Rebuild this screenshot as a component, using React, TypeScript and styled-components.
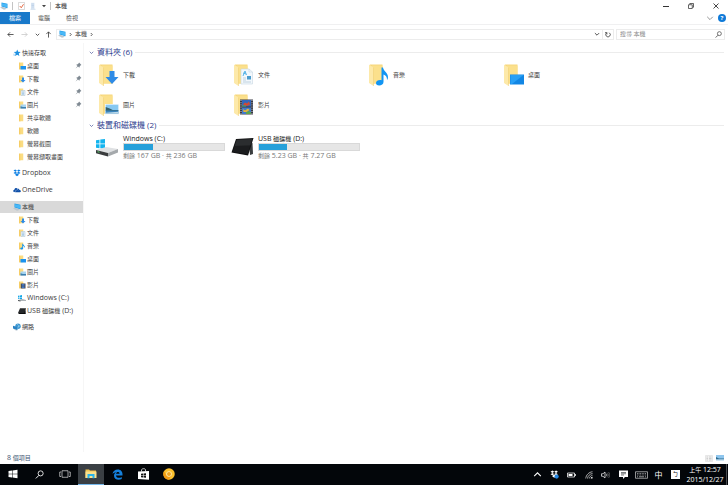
import React from "react";
import styled, { createGlobalStyle, css } from "styled-components";

const GlobalStyle = createGlobalStyle`
  *, *::before, *::after { box-sizing: border-box; }
  body {
    margin: 0;
    background: #fff;
    color: #3c3c3c;
    font-family: "Open Sans", "Noto Sans CJK TC", sans-serif;
    font-size: 7px;
    line-height: 10px;
  }
  button, input {
    margin: 0;
    padding: 0;
    border: 0;
    background: none;
    color: inherit;
    font: inherit;
  }
  ul { margin: 0; padding: 0; list-style: none; }
  a { color: inherit; text-decoration: none; }
  svg { display: block; flex: none; }
`;

/* ---------- text ---------- */

const Han = styled.span`
  font-size: 6px;
`;

/* Han glyphs are set one step smaller than the Latin text around them. */
function Mixed({ text }: { text: string }) {
  return (
    <span>
      {text.split(/([\u3400-\u9fff]+)/).map((part, i) =>
        i % 2 ? <Han key={i}>{part}</Han> : part
      )}
    </span>
  );
}

/* ---------- icons ---------- */

type SvgProps = { w: number; h: number; box?: string; children: React.ReactNode };
const Svg = ({ w, h, box, children }: SvgProps) => (
  <svg width={w} height={h} viewBox={box ?? `0 0 ${w} ${h}`} fill="none" aria-hidden="true">
    {children}
  </svg>
);

const PcIcon = () => (
  <Svg w={8} h={8} box="0 0 16 16">
    <path d="M3 1l12 2.500v9L3 9z" fill="#1f9be8" />
    <path d="M4 2.500l10 2v6.500L4 8z" fill="#49b8f7" />
    <path d="M0 11l5-1.500 9 4-6 2z" fill="#b9c6cf" />
  </Svg>
);

type Kind = "download" | "document" | "music" | "desktop" | "picture" | "video";

const Overlay = ({ kind }: { kind: Kind }) => {
  switch (kind) {
    case "download":
      return <path d="M11.500 7h5v6h4l-6.500 7-6.500-7h4z" fill="#2f8be6" />;
    case "document":
      return (
        <>
          <path d="M8 5h8l3.500 3v12H8z" fill="#f3f8fc" stroke="#c8d6e2" strokeWidth=".6" />
          <path d="M16 5v3h3.500" stroke="#c8d6e2" strokeWidth=".6" />
          <path d="M10 12l2-5 1.500 4M10 9l3 1" stroke="#58b4e6" strokeWidth="1" />
          <path d="M14 12h4v3.500h-4z" fill="#4b9ccd" />
          <path d="M10 14h3M10 16h3M10 18h8" stroke="#aac3d4" strokeWidth=".7" />
        </>
      );
    case "music":
      return (
        <path
          d="M13.500 3.500h1.500c.5 4 5 5 5 9.500 0 1.500-.5 2.500-1 3 .3-3-1.500-5-3.500-5.500v7.500c0 2-2 3.500-4.300 3.500S8 20.500 8 19c0-2 2.500-3.300 5.500-2.800z"
          fill="#1295f3"
        />
      );
    case "desktop":
      return (
        <>
          <path d="M7 10.500h14v10H7z" fill="#1286e4" />
          <path d="M7.500 11h13L9 20H7.500z" fill="#28a0f6" />
        </>
      );
    case "picture":
      return (
        <>
          <path d="M7 10h14v10.500H7z" fill="#f4f8fb" />
          <path d="M7.700 10.700h12.600v9H7.700z" fill="#86c8f2" />
          <path d="M7.700 13l4 1.500 3 1.500 5.600 0v1H7.700z" fill="#33606c" />
          <path d="M7.700 16.500h12.600v3.200H7.700z" fill="#3a84bd" />
          <path d="M7.700 18.700l12.600-1v2H7.700z" fill="#bcd9e8" />
        </>
      );
    case "video":
      return (
        <>
          <path d="M7 5.500h13v15H7z" fill="#3a3a44" />
          <path d="M9 6h9v6.500H9z" fill="#3467bb" />
          <path d="M9 13.500h9V20H9z" fill="#4079cb" />
          <path d="M10 10.500l2-2 2 1 2-2 1 3-3 1.500z" fill="#d44a31" />
          <path d="M9 11.500h4v1H9zM13 18l3-1 2 1.500V20h-5z" fill="#5ca64f" />
          <path d="M10 15l2 1.500 3-2 1.500 1.500-3 2-3 0z" fill="#e6b53a" />
          <path d="M8 6v15M19 6v15" stroke="#d8dbe2" strokeWidth=".9" strokeDasharray="1 1.200" />
        </>
      );
  }
};

const BigFolder = ({ kind }: { kind: Kind }) => (
  <Svg w={22} h={22}>
    <path d="M2 .5h12.500v19H2z" fill="#f6d67c" />
    <path d="M4 1.500h10.500v18H4z" fill="#fbe08c" />
    <path d="M1 .5l4.500 3V22L1 19z" fill="#fde9a9" />
    <path d="M5.500 3.500V22" stroke="#efcb6c" strokeWidth=".5" />
    <Overlay kind={kind} />
  </Svg>
);

const SmallOverlay = ({ kind }: { kind: Kind }) => {
  switch (kind) {
    case "download":
      return <path d="M8 5h4v5h3l-5 5-5-5h3z" fill="#2f8be6" />;
    case "document":
      return (
        <>
          <path d="M6 5h8v10H6z" fill="#eaf2f8" stroke="#a9bfd0" />
          <path d="M8 8h4M8 10.500h4M8 12.500h4" stroke="#68a5d0" />
        </>
      );
    case "music":
      return (
        <path d="M8.500 3.500h1.500c.5 3 4 4 4 6.500l-.8 2c0-2-1-3.500-3-4v4.500c0 1.500-1.400 2.500-3 2.500s-2.700-1-2.700-2c0-1.500 2-2.400 4-2z" fill="#1295f3" />
      );
    case "desktop":
      return <path d="M5 8h11v7H5z" fill="#1b93ef" />;
    case "picture":
      return (
        <>
          <path d="M5 7h11v8H5z" fill="#a8d5f1" />
          <path d="M5 10.500l5 1.500h6v3H5z" fill="#3d7fae" />
        </>
      );
    case "video":
      return (
        <>
          <path d="M5.500 5h9.500v10H5.500z" fill="#41434f" />
          <path d="M7.500 6h5.500v3.500H7.500zM7.500 10.500h5.500V14H7.500z" fill="#4579c4" />
        </>
      );
  }
};

const SmallFolder = ({ kind }: { kind?: Kind }) => (
  <Svg w={8} h={8} box="0 0 16 16">
    <path d="M2 1h8.500v13.500H2z" fill="#fbdc82" />
    <path d="M2 1l2.500 1.500v13L2 14z" fill="#f6cd66" />
    {kind && <SmallOverlay kind={kind} />}
  </Svg>
);

const StarIcon = () => (
  <Svg w={8} h={8} box="0 0 16 16">
    <path d="M8.500 1l1.900 4.600 5.100.3-4 3.200 1.300 5.100-4.400-2.800-4.400 2.600 1.300-4.900L1.500 5.900l5-.3z" fill="#1e90e0" />
    <path d="M0 10.500h4M1 13h3" stroke="#7bbdec" />
  </Svg>
);

const dropboxPath =
  "M4.500 1L8 3.300 4.600 5.500 1 3.200zM11.500 1L15 3.200l-3.600 2.300L8 3.300zM1 7.800l3.600-2.300L8 7.700 4.500 10zM15 7.800l-3.600-2.300L8 7.700l3.500 2.300zM4.500 11L8 8.700l3.500 2.300v1.200L8 14.500l-3.500-2.300z";

const DropboxIcon = () => (
  <Svg w={8} h={8} box="0 0 16 16">
    <path d={dropboxPath} fill="#0f80e3" />
  </Svg>
);

const OneDriveIcon = () => (
  <Svg w={8} h={8} box="0 0 16 16">
    <path d="M2.500 12C-.5 11.500 0 7.800 2.700 7.600 3 4.500 7 3 9 5.500c2.500-.8 4 1 4 2.500 3.500.2 3.500 4 .5 4.500H5z" fill="#0f4fa8" />
    <path d="M5 12.500c-1.500-2 0-4 1.700-3.800 1-2 3.600-1.800 4.300 0" stroke="#fff" strokeWidth=".7" />
  </Svg>
);

const DriveSmall = () => (
  <Svg w={8} h={8} box="0 0 16 16">
    <path d="M0 3.500l3-.5v3H0zM4 2.800L8 2v4H4zM0 7h3v3l-3-.5zM4 7h4v4l-4-.7z" fill="#14a7e8" />
    <path d="M0 12l9-2 7 2v2H5z" fill="#aeb4b8" />
    <path d="M0 12l5 1v2l-5-1z" fill="#4b4f52" />
  </Svg>
);

const TabletSmall = () => (
  <Svg w={8} h={8} box="0 0 16 16">
    <path d="M4 2.500h12L13.500 12H0z" fill="#26282a" />
    <path d="M0 12h12l3-6 .5 8H2z" fill="#0b0c0d" />
  </Svg>
);

const NetworkIcon = () => (
  <Svg w={8} h={8} box="0 0 16 16">
    <circle cx="10" cy="6.500" r="5.500" fill="#3d97d1" />
    <path d="M0 5.500l9 2.500v6.500L0 11z" fill="#2b83c4" />
    <path d="M8 2l4 4-3 5M15 5l-6 3" stroke="#a9d9f2" />
    <path d="M3 13l5 1.500" stroke="#8799a5" />
  </Svg>
);

const PinIcon = () => (
  <Svg w={7} h={7} box="0 0 12 12">
    <path d="M7 1l4 4-1.200.6L8 7.500 7.500 10 5.200 7.700 1 11l3.300-4.200L2 4.500 4.500 4 6.400 2.200z" fill="#7f8992" />
  </Svg>
);

const WindowsDrive = () => (
  <Svg w={24} h={22}>
    <path d="M1 4.200l3.500-.5v3.800H1zM5.300 3.600L10 3v4.500H5.300zM1 8.300h3.500v3.900L1 11.700zM5.300 8.300H10V13l-4.700-.7z" fill="#14b4ee" />
    <path d="M1 14l10-3 12 2-10 4z" fill="#dfe1e3" />
    <path d="M1 14l12 3v3.500L1 17.200z" fill="#3a3c3e" />
    <path d="M13 17l10-4v3.500l-10 4z" fill="#a5a9ac" />
    <path d="M2.500 15.700l2 .5" stroke="#58d16b" />
  </Svg>
);

const TabletDrive = () => (
  <Svg w={24} h={22}>
    <path d="M19 8l3.500-1L23 18l-3 1z" fill="#3b3d3f" />
    <path d="M6 3l17.500-1L18 19.500 1.500 16.500z" fill="#101112" />
    <path d="M6.800 3.800l15.500-.9-2 6.800L4.600 10z" fill="#2b2d2f" />
    <path d="M4.600 10l15.700-.3L17.500 18.300 2.600 15.700z" fill="#1b1c1e" />
  </Svg>
);

type Dir = "down" | "up" | "right";
const chevrons: Record<Dir, string> = {
  down: "M1.500 3.500L5 7 8.500 3.500",
  up: "M2 6.500L5 3.500 8 6.500",
  right: "M3.500 2L6.500 5 3.500 8",
};
const Chevron = ({ dir, size = 5, weight = 1.6 }: { dir: Dir; size?: number; weight?: number }) => (
  <Svg w={size} h={size} box="0 0 10 10">
    <path d={chevrons[dir]} stroke="currentColor" strokeWidth={weight} />
  </Svg>
);

const arrows = {
  left: "M15 8H2M7 3L2 8l5 5",
  right: "M1 8h13M9 3l5 5-5 5",
  up: "M8 15V2M3 7l5-5 5 5",
};
const Arrow = ({ dir }: { dir: keyof typeof arrows }) => (
  <Svg w={7} h={7} box="0 0 16 16">
    <path d={arrows[dir]} stroke="currentColor" strokeWidth="1.800" />
  </Svg>
);

const Magnifier = ({ size }: { size: number }) => (
  <Svg w={size} h={size} box="0 0 16 16">
    <circle cx="10" cy="6" r="4.500" stroke="currentColor" strokeWidth="1.500" />
    <path d="M7 9.500L1.500 15" stroke="currentColor" strokeWidth="1.700" />
  </Svg>
);

/* ---------- window frame ---------- */

const Screen = styled.div`
  display: flex;
  flex-direction: column;
  min-height: 100vh;
`;

const Explorer = styled.main`
  display: flex;
  flex: 1;
  flex-direction: column;
`;

const Bar = styled.div`
  display: flex;
  align-items: center;
`;

const TitleBar = styled(Bar)`
  height: 12px;
`;

const QuickTools = styled(Bar)`
  gap: 4px;
  padding-right: 4px;
`;

const Divider = styled.span`
  width: 1px;
  height: 8px;
  background: #c4c4c4;
`;

const WindowTitle = styled.h1`
  margin: 0;
  font-size: 7px;
  font-weight: 400;
  color: #222;
`;

const IconButton = styled.button<{ $w?: number; $tone?: string }>`
  display: flex;
  flex: none;
  align-items: center;
  justify-content: center;
  width: ${(p) => p.$w ?? 8}px;
  color: ${(p) => p.$tone ?? "#333"};
`;

const PushRight = styled(Bar)`
  margin-left: auto;
`;

const Ribbon = styled(Bar)`
  height: 13px;
  padding-right: 2px;
  border-bottom: 1px solid #f0f0f1;
`;

const Tab = styled.button<{ $active?: boolean }>`
  width: ${(p) => (p.$active ? 30 : 28)}px;
  height: 12px;
  color: #555;
  ${(p) =>
    p.$active &&
    css`
      background: #1979ca;
      color: #fff;
    `}
`;

const HelpBadge = styled.button`
  width: 8px;
  height: 8px;
  border-radius: 50%;
  background: #0f7ad8;
  color: #fff;
  font-size: 6px;
  font-weight: 700;
  line-height: 8px;
`;

const AddressRow = styled(Bar)`
  gap: 2px;
  height: 18px;
  padding: 0 3px 0 4px;
`;

const NavButtons = styled(Bar)`
  width: 50px;
  justify-content: space-between;
`;

const AddressBox = styled(Bar)`
  flex: 1;
  height: 11px;
  border: 1px solid #ececec;
  padding-left: 1px;
  gap: 2px;
`;

const RefreshCell = styled(Bar)`
  height: 9px;
  border-left: 1px solid #ececec;
`;

const SearchBox = styled(Bar)`
  flex: 0 0 109px;
  height: 11px;
  border: 1px solid #ececec;
  padding: 0 2px 0 3px;
`;

const SearchInput = styled.input`
  flex: 1;
  min-width: 0;
  outline: 0;
  font-size: 6px;
  &::placeholder {
    color: #8a8a8a;
    opacity: 1;
  }
`;

const Body = styled.div`
  display: flex;
  flex: 1;
`;

/* ---------- navigation pane ---------- */

const Nav = styled.nav`
  flex: 0 0 84px;
  padding-top: 4px;
  border-right: 1px solid #f6f6f6;
`;

const Group = styled.div<{ $nested?: boolean }>`
  margin-bottom: ${(p) => (p.$nested ? 4 : 5)}px;
`;

const NavLink = styled.a<{ $child?: boolean; $selected?: boolean }>`
  display: flex;
  align-items: center;
  gap: 1px;
  height: ${(p) => (p.$child ? 13 : 12)}px;
  padding-left: ${(p) => (p.$child ? 18 : 13)}px;
  padding-right: 1px;
  white-space: nowrap;
  background: ${(p) => (p.$selected ? "#d9d9d9" : "transparent")};
`;

const PinSlot = styled.span`
  margin-left: auto;
`;

type Entry = { name: string; icon: React.ReactNode; pinned?: boolean };
type NavGroup = Entry & { selected?: boolean; items?: Entry[] };

const folder = (name: string, kind?: Kind, pinned?: boolean): Entry => ({
  name,
  icon: <SmallFolder kind={kind} />,
  pinned,
});

const groups: NavGroup[] = [
  {
    name: "快速存取",
    icon: <StarIcon />,
    items: [
      folder("桌面", "desktop", true),
      folder("下載", "download", true),
      folder("文件", "document", true),
      folder("圖片", "picture", true),
      folder("共享軟體"),
      folder("軟體"),
      folder("螢幕截圖"),
      folder("螢幕擷取畫面"),
    ],
  },
  { name: "Dropbox", icon: <DropboxIcon /> },
  { name: "OneDrive", icon: <OneDriveIcon /> },
  {
    name: "本機",
    icon: <PcIcon />,
    selected: true,
    items: [
      folder("下載", "download"),
      folder("文件", "document"),
      folder("音樂", "music"),
      folder("桌面", "desktop"),
      folder("圖片", "picture"),
      folder("影片", "video"),
      { name: "Windows (C:)", icon: <DriveSmall /> },
      { name: "USB 磁碟機 (D:)", icon: <TabletSmall /> },
    ],
  },
  { name: "網路", icon: <NetworkIcon /> },
];

/* ---------- content pane ---------- */

const Content = styled.section`
  flex: 1;
  min-width: 0;
  padding: 4px 4px 0 5px;
`;

const SectionHead = styled.h2`
  display: flex;
  align-items: center;
  gap: 3px;
  height: 10px;
  margin: 0;
  font-size: 8px;
  font-weight: 400;
  color: #2b3a8c;
  white-space: nowrap;
  &::after {
    content: "";
    flex: 1;
    height: 1px;
    background: #ececec;
  }
`;

const Tiles = styled.ul<{ $last?: boolean }>`
  display: grid;
  grid-template-columns: repeat(auto-fill, 135px);
  grid-auto-rows: ${(p) => (p.$last ? 22 : 30)}px;
  padding: ${(p) => (p.$last ? "6px 0 0 6px" : "3px 0 0 9px")};
`;

const Tile = styled.li`
  display: flex;
  align-items: center;
`;

const TileLink = styled.a`
  display: flex;
  align-items: center;
  gap: 3px;
`;

const DriveLink = styled(TileLink)`
  gap: 4px;
`;

const DriveInfo = styled.div`
  width: 102px;
  line-height: 8px;
`;

const DriveName = styled.div`
  color: #222;
`;

const Meter = styled.div`
  height: 8px;
  border: 1px solid #d9d9d9;
  background: #e6e6e6;
  margin-bottom: 1px;
`;

const MeterFill = styled.div`
  height: 100%;
  background: #26a0da;
`;

const FreeSpace = styled.div`
  color: #777;
  white-space: nowrap;
`;

const folders: { name: string; kind: Kind }[] = [
  { name: "下載", kind: "download" },
  { name: "文件", kind: "document" },
  { name: "音樂", kind: "music" },
  { name: "桌面", kind: "desktop" },
  { name: "圖片", kind: "picture" },
  { name: "影片", kind: "video" },
];

const drives = [
  { name: "Windows (C:)", used: 29, free: "剩餘 167 GB · 共 236 GB", icon: <WindowsDrive /> },
  { name: "USB 磁碟機 (D:)", used: 28, free: "剩餘 5.23 GB · 共 7.27 GB", icon: <TabletDrive /> },
];

const StatusBar = styled.footer`
  display: flex;
  align-items: center;
  height: 12px;
  padding: 0 4px 0 7px;
  color: #3d5573;
`;

/* ---------- taskbar ---------- */

const Taskbar = styled.footer`
  display: flex;
  height: 21px;
  background: #03060a;
  color: #fff;
`;

const TaskButton = styled.button<{ $open?: boolean }>`
  display: flex;
  align-items: center;
  justify-content: center;
  width: 26px;
  border-bottom: 1px solid ${(p) => (p.$open ? "#76b9ed" : "transparent")};
  background: ${(p) => (p.$open ? "#3a3f44" : "transparent")};
`;

const Tray = styled.div`
  display: flex;
  margin-left: auto;
`;

const TrayButton = styled.button<{ $wide?: boolean }>`
  display: flex;
  align-items: center;
  justify-content: center;
  width: ${(p) => (p.$wide ? 18 : 17)}px;
  font-size: 8px;
`;

const Clock = styled.button`
  width: 42px;
  line-height: 9px;
  text-align: center;
  white-space: nowrap;
`;

const ShowDesktop = styled.button`
  width: 2px;
  border-left: 1px solid #4a4d50;
`;

const taskItems = [
  {
    label: "開始",
    icon: (
      <Svg w={10} h={10} box="0 0 20 20">
        <path d="M1 4l7-1v6.500H1zM9 2.900L19 1.500v8H9zM1 10.500h7V17l-7-1zM9 10.500h10v8L9 17.100z" fill="#fff" />
      </Svg>
    ),
  },
  { label: "搜尋", icon: <Magnifier size={9} /> },
  {
    label: "工作檢視",
    icon: (
      <Svg w={12} h={8} box="0 0 24 16">
        <path d="M6 1.500h12v13H6zM4 4H1.500v9H4M20 4h2.500v9H20" stroke="#e4e4e4" strokeWidth="1.400" />
      </Svg>
    ),
  },
  {
    label: "檔案總管",
    open: true,
    icon: (
      <Svg w={12} h={10} box="0 0 24 20">
        <path d="M1 1h7l2 2h12v15H1z" fill="#f1c453" />
        <path d="M1 5h22v13H1z" fill="#fde18c" />
        <path d="M5 10h14v8.500h-4V14H9v4.500H5z" fill="#2bb4ea" />
      </Svg>
    ),
  },
  {
    label: "Microsoft Edge",
    icon: (
      <Svg w={11} h={11} box="0 0 22 22">
        <path
          d="M1 10C2 4 6 1 11.500 1 18 1 21 5.500 21 10.500V13H8c0 5 7 6 11.500 3v4C12 23.500 4 20.500 4 13.500 4 10 6 7.500 9 6.500 5.500 6.500 3 8 1 10zM8.200 9.300h7c0-4.500-6.500-4.500-7 0z"
          fill="#1580dc"
        />
      </Svg>
    ),
  },
  {
    label: "市集",
    icon: (
      <Svg w={11} h={12} box="0 0 22 24">
        <path d="M0 7l22-1v17.500L0 22z" fill="#fff" />
        <path d="M7 7V4c0-3 8-4 8 0v3" stroke="#fff" strokeWidth="1.500" />
        <path d="M6 11.500l4-.5v3.500H6zM11 10.900l5-.6v4.200h-5zM6 15.500h4V19l-4-.5zM11 15.500h5v4.200l-5-.6z" fill="#111" />
      </Svg>
    ),
  },
  {
    label: "Chrome Canary",
    icon: (
      <Svg w={12} h={12} box="0 0 24 24">
        <circle cx="12" cy="12" r="11.500" fill="#fbc02d" />
        <path d="M2 6.500A11.500 11.500 0 0 0 12 23.500l5-9A6 6 0 0 1 7 15z" fill="#f29a12" />
        <circle cx="12" cy="12" r="5.500" fill="#fde9b4" />
        <circle cx="12" cy="12" r="4" fill="#f0a31e" />
      </Svg>
    ),
  },
];

const trayItems: { label: string; wide?: boolean; icon: React.ReactNode }[] = [
  { label: "顯示隱藏的圖示", icon: <Chevron dir="up" size={11} weight={1} /> },
  {
    label: "Dropbox",
    icon: (
      <Svg w={9} h={9} box="0 0 17 17">
        <path d={dropboxPath} fill="#fff" />
        <circle cx="12.500" cy="12.500" r="4" fill="#2385e0" />
      </Svg>
    ),
  },
  {
    label: "電池",
    icon: (
      <Svg w={9} h={6} box="0 0 18 12">
        <path d="M1 2h14v8H1z" stroke="#fff" strokeWidth="1.500" />
        <path d="M3 4h8v4H3zM15.500 4.500H18v3h-2.500z" fill="#fff" />
      </Svg>
    ),
  },
  {
    label: "Wi-Fi",
    icon: (
      <Svg w={8} h={8} box="0 0 16 16">
        <path d="M1.500 15C2 8 8 2 15 1.500M5 15c.5-5 5-9.500 10-10M8.500 15c.5-3 3.500-6 6.500-6.500" stroke="#d6d6d6" strokeWidth="1.500" />
        <path d="M11.500 15c0-2 1.500-3.500 3.500-3.500V15z" fill="#fff" />
      </Svg>
    ),
  },
  {
    label: "音量",
    icon: (
      <Svg w={9} h={8} box="0 0 18 16">
        <path d="M1 5.500h3L8 2v12l-4-3.500H1z" stroke="#fff" strokeWidth="1.400" />
        <path d="M10.500 5.500c1.500 1.500 1.500 3.500 0 5" stroke="#fff" strokeWidth="1.400" />
        <path d="M12.500 3.500c3 3 3 6 0 9M15 2c3.500 4 3.500 8 0 12" stroke="#8a8a8a" strokeWidth="1.100" />
      </Svg>
    ),
  },
  {
    label: "通知",
    wide: true,
    icon: (
      <Svg w={9} h={9} box="0 0 18 18">
        <path d="M0 1h18v13h-6l-4 4v-4H0z" fill="#fff" />
        <path d="M4 5h10M4 7.500h10M4 10h6" stroke="#22262a" strokeWidth="1.200" />
      </Svg>
    ),
  },
  {
    label: "觸控鍵盤",
    wide: true,
    icon: (
      <Svg w={13} h={8} box="0 0 26 16">
        <path d="M1 1.500h24v13H1z" stroke="#ddd" strokeWidth="1.300" />
        <path d="M4 5h18M4 8h18" stroke="#ddd" strokeWidth="1.300" strokeDasharray="1.800 1.400" />
        <path d="M4 11.500h2M8 11.500h10M20 11.500h2" stroke="#ddd" strokeWidth="1.300" />
      </Svg>
    ),
  },
];

const ImeBadge = styled.span`
  width: 9px;
  height: 9px;
  background: #fff;
  color: #111;
  font-size: 6px;
  line-height: 8px;
`;

export default function App() {
  return (
    <Screen>
      <GlobalStyle />
      <Explorer>
        <TitleBar>
          <QuickTools>
            <PcIcon />
            <Divider />
            <IconButton aria-label="內容">
              <Svg w={7} h={8} box="0 0 14 16">
                <path d="M1 1h12v14H1z" fill="#fff" stroke="#b6b6b6" />
                <path d="M3.500 8l3 3.500 4.500-7" stroke="#e2572b" strokeWidth="1.800" />
              </Svg>
            </IconButton>
            <IconButton aria-label="新增資料夾">
              <Svg w={6} h={8} box="0 0 12 16">
                <path d="M2 1.500h7v13H2z" fill="#dce8f5" />
                <path d="M3 4h5M3 7h5M3 10h5M1 14.500h10" stroke="#a9c1dc" />
              </Svg>
            </IconButton>
            <IconButton aria-label="自訂快速存取工具列" $w={5}>
              <Svg w={4} h={4} box="0 0 8 8">
                <path d="M0 2h8L4 6.500z" fill="#444" />
              </Svg>
            </IconButton>
            <Divider />
          </QuickTools>
          <WindowTitle>
            <Mixed text="本機" />
          </WindowTitle>
          <PushRight>
            <IconButton aria-label="最小化" $w={24}>
              <Svg w={6} h={6}>
                <path d="M0 3.500h6" stroke="currentColor" />
              </Svg>
            </IconButton>
            <IconButton aria-label="還原" $w={25}>
              <Svg w={6} h={6} box="0 0 12 12">
                <path d="M1 3.500h7.500V11H1zM3.500 3V1H11v7.500H9" stroke="currentColor" strokeWidth="1.500" />
              </Svg>
            </IconButton>
            <IconButton aria-label="關閉" $w={25}>
              <Svg w={6} h={6}>
                <path d="M.5.5l5 5M5.500.5l-5 5" stroke="currentColor" strokeWidth=".9" />
              </Svg>
            </IconButton>
          </PushRight>
        </TitleBar>

        <Ribbon>
          <Tab $active>
            <Mixed text="檔案" />
          </Tab>
          <Tab>
            <Mixed text="電腦" />
          </Tab>
          <Tab>
            <Mixed text="檢視" />
          </Tab>
          <PushRight>
            <IconButton aria-label="展開功能區" $w={16} $tone="#888">
              <Chevron dir="down" size={8} weight={1.1} />
            </IconButton>
            <HelpBadge aria-label="說明">?</HelpBadge>
          </PushRight>
        </Ribbon>

        <AddressRow>
          <NavButtons>
            <IconButton aria-label="上一頁" $w={13}>
              <Arrow dir="left" />
            </IconButton>
            <IconButton aria-label="下一頁" $w={15} $tone="#c8c8c8">
              <Arrow dir="right" />
            </IconButton>
            <IconButton aria-label="最近的位置" $w={10}>
              <Chevron dir="down" />
            </IconButton>
            <IconButton aria-label="上移" $w={12}>
              <Arrow dir="up" />
            </IconButton>
          </NavButtons>
          <AddressBox>
            <PcIcon />
            <Chevron dir="right" />
            <Mixed text="本機" />
            <Chevron dir="right" />
            <PushRight>
              <IconButton aria-label="先前的位置" $w={10}>
                <Chevron dir="down" size={6} weight={1.4} />
              </IconButton>
              <RefreshCell>
                <IconButton aria-label="重新整理" $w={10}>
                  <Svg w={6} h={7} box="0 0 12 14">
                    <path d="M8.500 3.500a4.500 4.500 0 1 1-5 0M3.800 7V3.300H0" stroke="currentColor" strokeWidth="1.500" />
                  </Svg>
                </IconButton>
              </RefreshCell>
            </PushRight>
          </AddressBox>
          <SearchBox>
            <SearchInput type="text" aria-label="搜尋 本機" placeholder="搜尋 本機" />
            <IconButton aria-label="搜尋">
              <Magnifier size={7} />
            </IconButton>
          </SearchBox>
        </AddressRow>

        <Body>
          <Nav aria-label="瀏覽窗格">
            {groups.map((g) => (
              <Group key={g.name} $nested={!!g.items}>
                <NavLink href="#" $selected={g.selected}>
                  {g.icon}
                  <Mixed text={g.name} />
                </NavLink>
                {g.items && (
                  <ul>
                    {g.items.map((it) => (
                      <li key={it.name}>
                        <NavLink href="#" $child>
                          {it.icon}
                          <Mixed text={it.name} />
                          {it.pinned && (
                            <PinSlot>
                              <PinIcon />
                            </PinSlot>
                          )}
                        </NavLink>
                      </li>
                    ))}
                  </ul>
                )}
              </Group>
            ))}
          </Nav>

          <Content>
            <SectionHead>
              <Chevron dir="down" weight={1.2} />
              資料夾 (6)
            </SectionHead>
            <Tiles>
              {folders.map((f) => (
                <Tile key={f.name}>
                  <TileLink href="#">
                    <BigFolder kind={f.kind} />
                    <Mixed text={f.name} />
                  </TileLink>
                </Tile>
              ))}
            </Tiles>
            <SectionHead>
              <Chevron dir="down" weight={1.2} />
              裝置和磁碟機 (2)
            </SectionHead>
            <Tiles $last>
              {drives.map((d) => (
                <Tile key={d.name}>
                  <DriveLink href="#">
                    {d.icon}
                    <DriveInfo>
                      <DriveName>
                        <Mixed text={d.name} />
                      </DriveName>
                      <Meter>
                        <MeterFill style={{ width: `${d.used}%` }} />
                      </Meter>
                      <FreeSpace>
                        <Mixed text={d.free} />
                      </FreeSpace>
                    </DriveInfo>
                  </DriveLink>
                </Tile>
              ))}
            </Tiles>
          </Content>
        </Body>

        <StatusBar>
          <Mixed text="8 個項目" />
          <PushRight>
            <IconButton aria-label="詳細資料" $w={14}>
              <Svg w={8} h={7} box="0 0 16 14">
                <path d="M1 1h14v12H1z" fill="#f3f3f3" stroke="#d4d4d4" />
                <path d="M3 4h3M3 7h3M3 10h3M8 4h5M8 7h5M8 10h5" stroke="#aaa" />
              </Svg>
            </IconButton>
            <IconButton aria-label="大圖示" $w={8}>
              <Svg w={8} h={6} box="0 0 16 12">
                <path d="M0 0h16v12H0z" fill="#8fc6ee" />
                <path d="M0 4l6 3h10v2H0z" fill="#2d6a8e" />
                <path d="M0 9h16v3H0z" fill="#cfe4f1" />
              </Svg>
            </IconButton>
          </PushRight>
        </StatusBar>
      </Explorer>

      <Taskbar>
        {taskItems.map((t) => (
          <TaskButton key={t.label} aria-label={t.label} $open={t.open}>
            {t.icon}
          </TaskButton>
        ))}
        <Tray>
          {trayItems.map((t) => (
            <TrayButton key={t.label} aria-label={t.label} $wide={t.wide}>
              {t.icon}
            </TrayButton>
          ))}
          <TrayButton>中</TrayButton>
          <TrayButton aria-label="輸入法">
            <ImeBadge>ㄅ</ImeBadge>
          </TrayButton>
          <Clock>
            <Mixed text="上午 12:57" />
            <br />
            2015/12/27
          </Clock>
          <ShowDesktop aria-label="顯示桌面" />
        </Tray>
      </Taskbar>
    </Screen>
  );
}
